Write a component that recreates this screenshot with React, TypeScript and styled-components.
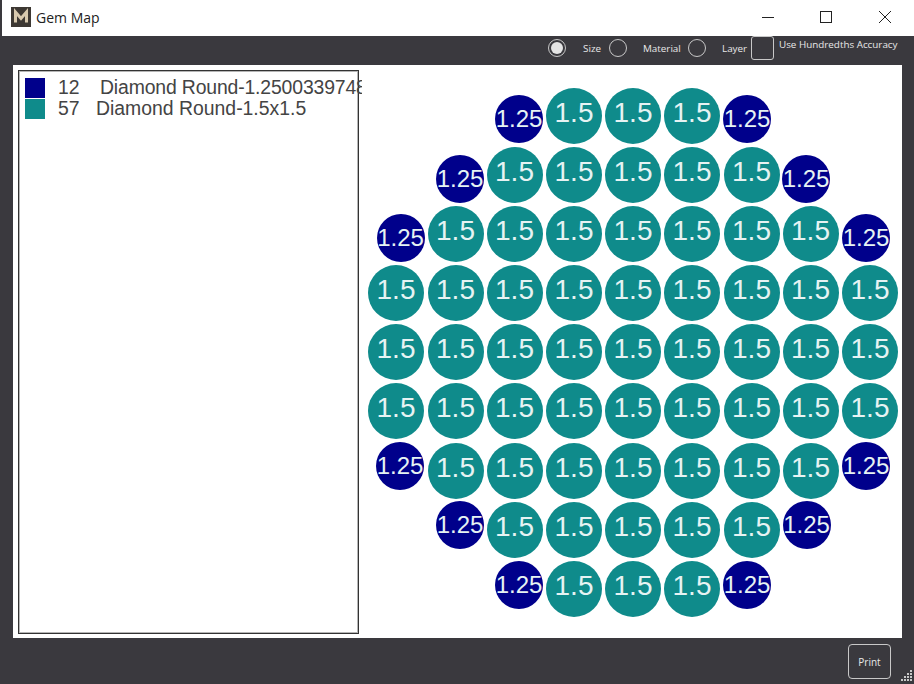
import React from 'react';
import styled, { createGlobalStyle } from 'styled-components';

const GlobalStyle = createGlobalStyle`
    html, body {
        margin: 0;
        padding: 0;
        height: 684px;
        overflow: hidden;
        background: #3a393e;
    }
    body {
        font-family: 'Liberation Sans', Arial, sans-serif;
    }
`;

const Window = styled.div`
    width: 914px;
    height: 684px;
    display: flex;
    flex-direction: column;
    background: #3a393e;
`;

const TitleBar = styled.div`
    height: 36px;
    margin-left: 2px;
    background: #fff;
    display: flex;
    align-items: center;
    padding: 0 0 2px 9px;
    box-sizing: border-box;
`;

const AppLogo = styled.svg`
    width: 20px;
    height: 20px;
    margin-right: 5px;
`;

const Title = styled.span`
    font-family: 'Open Sans', sans-serif;
    font-size: 14px;
    color: #222;
    flex: 1;
`;

const WinButton = styled.button`
    width: 58.5px;
    height: 34px;
    padding: 0;
    border: 0;
    background: none;
    display: flex;
    align-items: center;
    justify-content: center;
`;

const Toolbar = styled.div`
    height: 29px;
    display: flex;
    align-items: flex-start;
    padding-left: 548px;
    color: #e8e8e8;
    font-family: 'Open Sans', sans-serif;
    font-size: 9.85px;
`;

const Radio = styled.span<{ $on?: boolean }>`
    width: 18px;
    height: 18px;
    margin-top: 3px;
    box-sizing: border-box;
    border: 1px solid #c8c8c8;
    border-radius: 50%;
    display: flex;
    align-items: center;
    justify-content: center;
    flex: none;
    &::after {
        content: '';
        display: ${(p) => (p.$on ? 'block' : 'none')};
        width: 12px;
        height: 12px;
        border-radius: 50%;
        background: #e4e4e4;
    }
`;

const RadioLabel = styled.span<{ $w: number; $pad: number }>`
    width: ${(p) => p.$w}px;
    padding-left: ${(p) => p.$pad}px;
    margin-top: 6px;
    line-height: 13px;
    box-sizing: border-box;
    flex: none;
`;

const CheckBox = styled.span`
    width: 23px;
    height: 24px;
    box-sizing: border-box;
    border: 1px solid #c8c8c8;
    border-radius: 3px;
    flex: none;
`;

const CheckLabel = styled.span`
    margin: 2px 0 0 5px;
    line-height: 13px;
    white-space: nowrap;
`;

const Panel = styled.div`
    width: 889px;
    height: 573px;
    margin-left: 13px;
    background: #fff;
    position: relative;
    box-sizing: border-box;
    padding: 5px;
`;

const Legend = styled.div`
    width: 341px;
    height: 564px;
    box-sizing: border-box;
    border: 1px solid #333;
    box-shadow: inset 0 0 0 1px #b5b5b5;
    padding: 6px;
`;

const LegendRow = styled.div`
    width: 337px;
    display: flex;
    align-items: center;
    height: 21px;
    overflow: hidden;
    white-space: nowrap;
    font-size: 19.4px;
    color: #444;
`;

const Swatch = styled.span<{ $color: string }>`
    width: 20px;
    height: 20px;
    background: ${(p) => p.$color};
    flex: none;
`;

const LegendCount = styled.span`
    width: 33px;
    margin-left: 13px;
    flex: none;
`;

const LegendName = styled.span<{ $gap: number; $tight?: boolean }>`
    margin-left: ${(p) => p.$gap}px;
    letter-spacing: ${(p) => (p.$tight ? -0.15 : 0)}px;
`;

const Gem = styled.span<{ $small: boolean }>`
    position: absolute;
    width: ${(p) => (p.$small ? 48 : 56)}px;
    height: ${(p) => (p.$small ? 48 : 56)}px;
    margin: ${(p) => (p.$small ? '-24px 0 0 -24px' : '-28px 0 0 -28px')};
    border-radius: 50%;
    background: ${(p) => (p.$small ? '#00008b' : '#0f8b8b')};
    color: #e6f3f3;
    font-size: ${(p) => (p.$small ? 24 : 28)}px;
    display: flex;
    align-items: center;
    justify-content: center;
    padding-bottom: ${(p) => (p.$small ? 0 : 6)}px;
    box-sizing: border-box;
`;

const PrintBar = styled.div`
    flex: 1;
    position: relative;
    display: flex;
    justify-content: flex-end;
    padding: 6px 23px 0 0;
`;

const PrintButton = styled.button`
    width: 43px;
    height: 35px;
    box-sizing: border-box;
    background: none;
    border: 1px solid #c8c8c8;
    border-radius: 4px;
    color: #e8e8e8;
    font-family: 'Open Sans', sans-serif;
    font-size: 10px;
    padding: 0;
`;

const Grip = styled.svg`
    position: absolute;
    right: 1px;
    bottom: 1px;
    width: 14px;
    height: 14px;
`;

// x positions of the big stones on each of the nine rows
const BIG_X = [396, 455.5, 514.5, 574, 633, 692, 751.5, 810.5, 870];
const ROWS = [
    { y: 115.5, big: [3, 4, 5], small: [[519, 119], [747, 119]] },
    { y: 174.5, big: [2, 3, 4, 5, 6], small: [[460, 179], [806, 179]] },
    { y: 233.5, big: [1, 2, 3, 4, 5, 6, 7], small: [[400.5, 238], [866, 238]] },
    { y: 293, big: [0, 1, 2, 3, 4, 5, 6, 7, 8], small: [] },
    { y: 352, big: [0, 1, 2, 3, 4, 5, 6, 7, 8], small: [] },
    { y: 411, big: [0, 1, 2, 3, 4, 5, 6, 7, 8], small: [] },
    { y: 470.5, big: [1, 2, 3, 4, 5, 6, 7], small: [[400, 466], [866, 466]] },
    { y: 529.5, big: [2, 3, 4, 5, 6], small: [[460, 525], [806.5, 525]] },
    { y: 588.5, big: [3, 4, 5], small: [[519, 585], [747, 585]] },
];

const PANEL_X = 13;
const PANEL_Y = 65;

const App = () => {
    return (
        <Window>
            <GlobalStyle />
            <TitleBar>
                <AppLogo viewBox="0 0 20 20">
                    <rect width="20" height="20" fill="#3d3833" />
                    <path d="M4.5 15.5V5l5.5 6.5L15.5 5v10.5" fill="none" stroke="#d8c9ae" strokeWidth="3" />
                </AppLogo>
                <Title>Gem Map</Title>
                <WinButton>
                    <svg width="14" height="14" viewBox="0 0 14 14"><path d="M1 7.5h12" stroke="#222" /></svg>
                </WinButton>
                <WinButton>
                    <svg width="14" height="14" viewBox="0 0 14 14"><rect x="1.5" y="1.5" width="11" height="11" fill="none" stroke="#222" /></svg>
                </WinButton>
                <WinButton>
                    <svg width="14" height="14" viewBox="0 0 14 14"><path d="M1 1l12 12M13 1L1 13" stroke="#222" /></svg>
                </WinButton>
            </TitleBar>
            <Toolbar>
                <Radio $on />
                <RadioLabel $w={43} $pad={17}>Size</RadioLabel>
                <Radio />
                <RadioLabel $w={61} $pad={16}>Material</RadioLabel>
                <Radio />
                <RadioLabel $w={45} $pad={16}>Layer</RadioLabel>
                <CheckBox />
                <CheckLabel>Use Hundredths Accuracy</CheckLabel>
            </Toolbar>
            <Panel>
                <Legend>
                    <LegendRow>
                        <Swatch $color="#00008b" />
                        <LegendCount>12</LegendCount>
                        <LegendName $gap={9} $tight>Diamond Round-1.2500339748</LegendName>
                    </LegendRow>
                    <LegendRow>
                        <Swatch $color="#0f8b8b" />
                        <LegendCount>57</LegendCount>
                        <LegendName $gap={5}>Diamond Round-1.5x1.5</LegendName>
                    </LegendRow>
                </Legend>
                {ROWS.map((row) => (
                    <React.Fragment key={row.y}>
                        {row.big.map((i) => (
                            <Gem key={i} $small={false} style={{ left: BIG_X[i] - PANEL_X, top: row.y - PANEL_Y }}>1.5</Gem>
                        ))}
                        {row.small.map(([x, y]) => (
                            <Gem key={x} $small style={{ left: x - PANEL_X, top: y - PANEL_Y }}>1.25</Gem>
                        ))}
                    </React.Fragment>
                ))}
            </Panel>
            <PrintBar>
                <PrintButton>Print</PrintButton>
                <Grip viewBox="0 0 14 14">
                    <g fill="#c8c8c8">
                        <rect x="11" y="1" width="2" height="2" />
                        <rect x="8" y="4" width="2" height="2" />
                        <rect x="11" y="4" width="2" height="2" />
                        <rect x="5" y="7" width="2" height="2" />
                        <rect x="8" y="7" width="2" height="2" />
                        <rect x="11" y="7" width="2" height="2" />
                        <rect x="2" y="10" width="2" height="2" />
                        <rect x="5" y="10" width="2" height="2" />
                        <rect x="8" y="10" width="2" height="2" />
                        <rect x="11" y="10" width="2" height="2" />
                    </g>
                </Grip>
            </PrintBar>
        </Window>
    );
};

export default App;
